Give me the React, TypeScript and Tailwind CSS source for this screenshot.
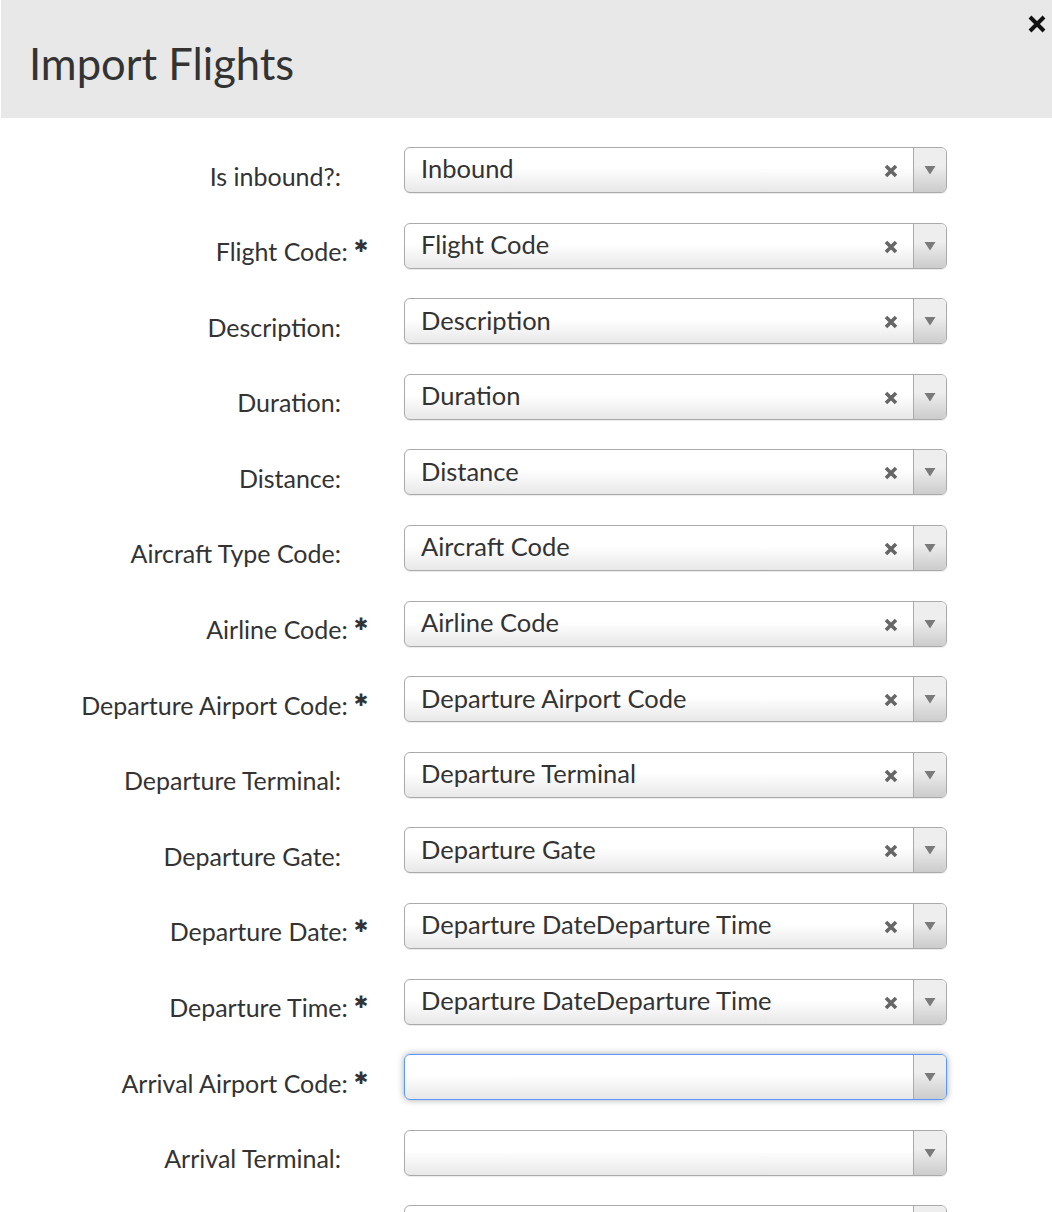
const fields: { label: string; required?: boolean; value: string; focused?: boolean }[] = [
  { label: "Is inbound?:", value: "Inbound" },
  { label: "Flight Code:", required: true, value: "Flight Code" },
  { label: "Description:", value: "Description" },
  { label: "Duration:", value: "Duration" },
  { label: "Distance:", value: "Distance" },
  { label: "Aircraft Type Code:", value: "Aircraft Code" },
  { label: "Airline Code:", required: true, value: "Airline Code" },
  { label: "Departure Airport Code:", required: true, value: "Departure Airport Code" },
  { label: "Departure Terminal:", value: "Departure Terminal" },
  { label: "Departure Gate:", value: "Departure Gate" },
  { label: "Departure Date:", required: true, value: "Departure DateDeparture Time" },
  { label: "Departure Time:", required: true, value: "Departure DateDeparture Time" },
  { label: "Arrival Airport Code:", required: true, value: "", focused: true },
  { label: "Arrival Terminal:", value: "" },
  // next row's label sits below the fold
  { label: "", value: "" },
];

function ClearIcon() {
  return (
    <svg width="14" height="14" viewBox="0 0 14 14">
      <path d="M2 2 L12 12 M12 2 L2 12" stroke="#666" strokeWidth="3.6" />
    </svg>
  );
}

function Arrow() {
  return (
    <svg width="12" height="10" viewBox="0 0 12 10">
      <path d="M0.5 1 L11.5 1 L6 9.5 Z" fill="#7a7a7a" />
    </svg>
  );
}

function Select({ value, focused }: { value: string; focused?: boolean }) {
  return (
    <div
      className={`relative flex h-[46px] w-[543px] items-center rounded-[6px] border bg-[linear-gradient(to_top,#e8e8e8_0%,#ffffff_55%)] ${
        focused
          ? "border-[#5897fb] shadow-[0_0_7px_rgba(0,0,0,0.35)]"
          : "border-[#aaaaaa] shadow-[0_1px_1px_rgba(0,0,0,0.08)]"
      }`}
    >
      <span className="flex-1 truncate pb-[3px] pl-[16px] text-[25.5px] text-[#333]">{value}</span>
      {value && (
        <span className="mr-[15px] flex items-center pt-[2px]">
          <ClearIcon />
        </span>
      )}
      <span className="flex h-full w-[33px] items-center justify-center rounded-r-[5px] border-l border-[#aaaaaa] bg-[linear-gradient(to_top,#cccccc_0%,#eeeeee_60%)]">
        <Arrow />
      </span>
    </div>
  );
}

export default function App() {
  return (
    <div className="relative h-[1212px] overflow-hidden bg-white font-['Lato',sans-serif] text-[#333]">
      <div className="ml-[1px] flex h-[118px] items-center bg-[#e8e8e8] pl-[28px]">
        <h1 className="pt-[9px] text-[43.5px] leading-none text-[#333]">Import Flights</h1>
      </div>
      <button className="absolute right-[3px] top-[12px] flex h-[24px] w-[24px] items-center justify-center">
        <svg width="20" height="20" viewBox="0 0 20 20">
          <path d="M3 3 L17 17 M17 3 L3 17" stroke="#111" strokeWidth="4" />
        </svg>
      </button>

      <div className="flex flex-col gap-y-[29.6px] pt-[29px]">
        {fields.map((f, i) => (
          <div key={i} className="flex h-[46px] items-stretch">
            <div className="flex w-[368px] items-center justify-end pt-[12px] text-[25px] leading-none text-[#333]">
              <span>{f.label}</span>
              {f.required ? (
                <span className="mb-[10px] ml-[6px] font-['DejaVu_Sans',sans-serif] text-[17px] font-bold leading-none">
                  ✱
                </span>
              ) : (
                <span className="w-[27px]" />
              )}
            </div>
            <div className="ml-[36px] flex items-center">
              <Select value={f.value} focused={f.focused} />
            </div>
          </div>
        ))}
      </div>
    </div>
  );
}
